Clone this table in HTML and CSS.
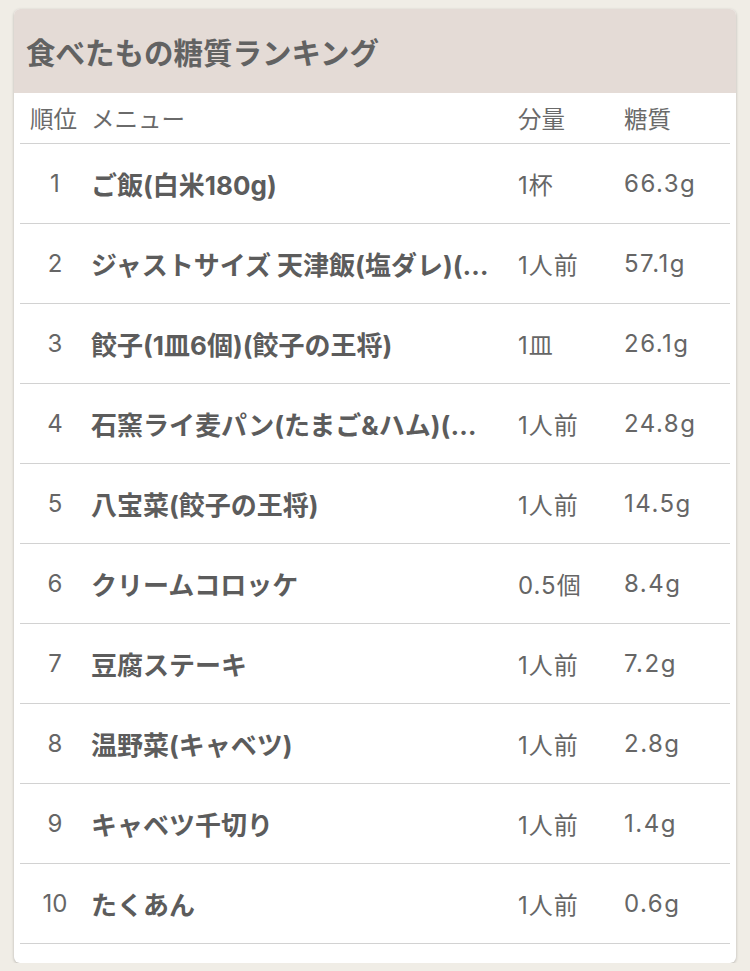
FILE: index.html
```html
<!DOCTYPE html>
<html lang="ja">
<head>
<meta charset="utf-8">
<link rel="stylesheet" href="styles.css">
</head>
<body>
<div class="card">
  <div class="card-head">食べたもの糖質ランキング</div>
  <div class="table">
    <div class="row head">
      <div class="c-rank">順位</div><div class="c-menu">メニュー</div><div class="c-amt">分量</div><div class="c-carb">糖質</div>
    </div>
    <div class="row"><div class="c-rank">1</div><div class="c-menu">ご飯(白米180g)</div><div class="c-amt">1杯</div><div class="c-carb">66.3g</div></div>
    <div class="row"><div class="c-rank">2</div><div class="c-menu">ジャストサイズ 天津飯(塩ダレ)(バーミヤン)</div><div class="c-amt">1人前</div><div class="c-carb">57.1g</div></div>
    <div class="row"><div class="c-rank">3</div><div class="c-menu">餃子(1皿6個)(餃子の王将)</div><div class="c-amt">1皿</div><div class="c-carb">26.1g</div></div>
    <div class="row"><div class="c-rank">4</div><div class="c-menu">石窯ライ麦パン(たまご&amp;ハム)(ドトール)</div><div class="c-amt">1人前</div><div class="c-carb">24.8g</div></div>
    <div class="row"><div class="c-rank">5</div><div class="c-menu">八宝菜(餃子の王将)</div><div class="c-amt">1人前</div><div class="c-carb">14.5g</div></div>
    <div class="row"><div class="c-rank">6</div><div class="c-menu">クリームコロッケ</div><div class="c-amt">0.5個</div><div class="c-carb">8.4g</div></div>
    <div class="row"><div class="c-rank">7</div><div class="c-menu">豆腐ステーキ</div><div class="c-amt">1人前</div><div class="c-carb">7.2g</div></div>
    <div class="row"><div class="c-rank">8</div><div class="c-menu">温野菜(キャベツ)</div><div class="c-amt">1人前</div><div class="c-carb">2.8g</div></div>
    <div class="row"><div class="c-rank">9</div><div class="c-menu">キャベツ千切り</div><div class="c-amt">1人前</div><div class="c-carb">1.4g</div></div>
    <div class="row"><div class="c-rank">10</div><div class="c-menu">たくあん</div><div class="c-amt">1人前</div><div class="c-carb">0.6g</div></div>
  </div>
</div>
</body>
</html>
```
FILE: styles.css
```css
html, body {
  margin: 0;
  padding: 0;
  background: #f0ede6;
}
body {
  padding: 9px 14px 0 14px;
  font-family: "Inter", "Noto Sans CJK JP", sans-serif;
  color: #666;
}
.card {
  background: #fff;
  border-radius: 6px;
  overflow: hidden;
  box-shadow: 0 1px 3px rgba(0,0,0,0.25);
  padding-bottom: 19px;
}
.card-head {
  background: #e4dbd6;
  height: 84px;
  display: flex;
  align-items: center;
  padding-left: 12px;
  font-family: "Noto Sans CJK JP", sans-serif;
  font-weight: 700;
  font-size: 29.5px;
  color: #626262;
}
.table {
  margin: 0 6px;
}
.row {
  display: grid;
  grid-template-columns: 71px 427px 106px 106px;
  align-items: center;
  height: 79px;
  border-bottom: 1px solid #d2d2d2;
  font-size: 24px;
}
.row.head {
  height: 50px;
  font-size: 23.5px;
  font-family: "Noto Sans CJK JP", sans-serif;
  font-weight: 400;
  color: #6a6a6a;
  letter-spacing: 0;
}
.row.head .c-rank {
  text-align: left;
  padding-left: 10px;
}
.c-rank {
  text-align: center;
  padding-right: 1px;
}
.c-menu {
  font-size: 26px;
  font-weight: 700;
  color: #5c5c5c;
  white-space: nowrap;
  overflow: hidden;
  text-overflow: ellipsis;
  padding-right: 20px;
}
.row.head .c-menu {
  font-size: 23.5px;
  font-weight: 400;
  color: #6a6a6a;
}
.c-amt, .c-carb {
  white-space: nowrap;
}
.c-amt {
  letter-spacing: 1px;
}
.c-carb {
  letter-spacing: 1.5px;
}
.row.head .c-amt, .row.head .c-carb {
  letter-spacing: 0;
}
```
